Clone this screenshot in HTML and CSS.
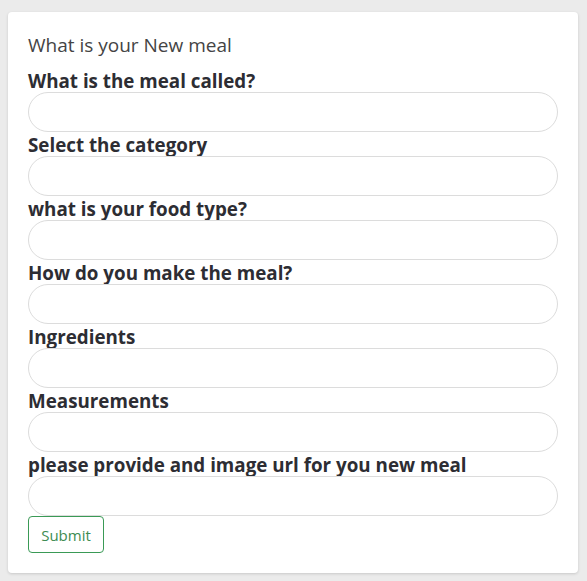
FILE: index.html
```html
<!DOCTYPE html>
<html>
<head>
<meta charset="utf-8">
<link rel="stylesheet" href="styles.css">
</head>
<body>
<div class="card">
  <h1 class="title">What is your New meal</h1>
  <form class="form">
    <label class="label">What is the meal called?</label>
    <input class="field" type="text">
    <label class="label">Select the category</label>
    <input class="field" type="text">
    <label class="label">what is your food type?</label>
    <input class="field" type="text">
    <label class="label">How do you make the meal?</label>
    <input class="field" type="text">
    <label class="label">Ingredients</label>
    <input class="field" type="text">
    <label class="label">Measurements</label>
    <input class="field" type="text">
    <label class="label">please provide and image url for you new meal</label>
    <input class="field" type="text">
    <div><button class="submit" type="button">Submit</button></div>
  </form>
</div>
</body>
</html>
```
FILE: styles.css
```css
html, body {
  margin: 0;
  padding: 0;
  background: #ebebeb;
}
body {
  padding: 12px 9px 8px 8px;
  font-family: "Open Sans", sans-serif;
}
.card {
  background: #fff;
  border-radius: 4px;
  box-shadow: 0 1px 3px rgba(0,0,0,0.15);
  padding: 20px 20px 20px 20px;
}
.title {
  margin: 0 0 10px 0;
  font-size: 19px;
  font-weight: 400;
  line-height: 26px;
  color: #444;
}
.form {
  display: flex;
  flex-direction: column;
}
.label {
  font-size: 18.8px;
  font-weight: 700;
  line-height: 24px;
  padding-top: 1px;
  margin-bottom: -1px;
  color: #2d2d33;
}
.field {
  box-sizing: border-box;
  height: 40px;
  width: 100%;
  border: 1px solid #dcdcdc;
  border-radius: 20px;
  background: #fff;
  margin: 0;
  padding: 0 12px;
}
.submit {
  box-sizing: border-box;
  height: 37px;
  width: 76px;
  background: #fff;
  border: 1px solid #3a9a56;
  color: #3d8c52;
  border-radius: 4px;
  font-family: "Open Sans", sans-serif;
  font-size: 15px;
  padding: 0;
}
```
